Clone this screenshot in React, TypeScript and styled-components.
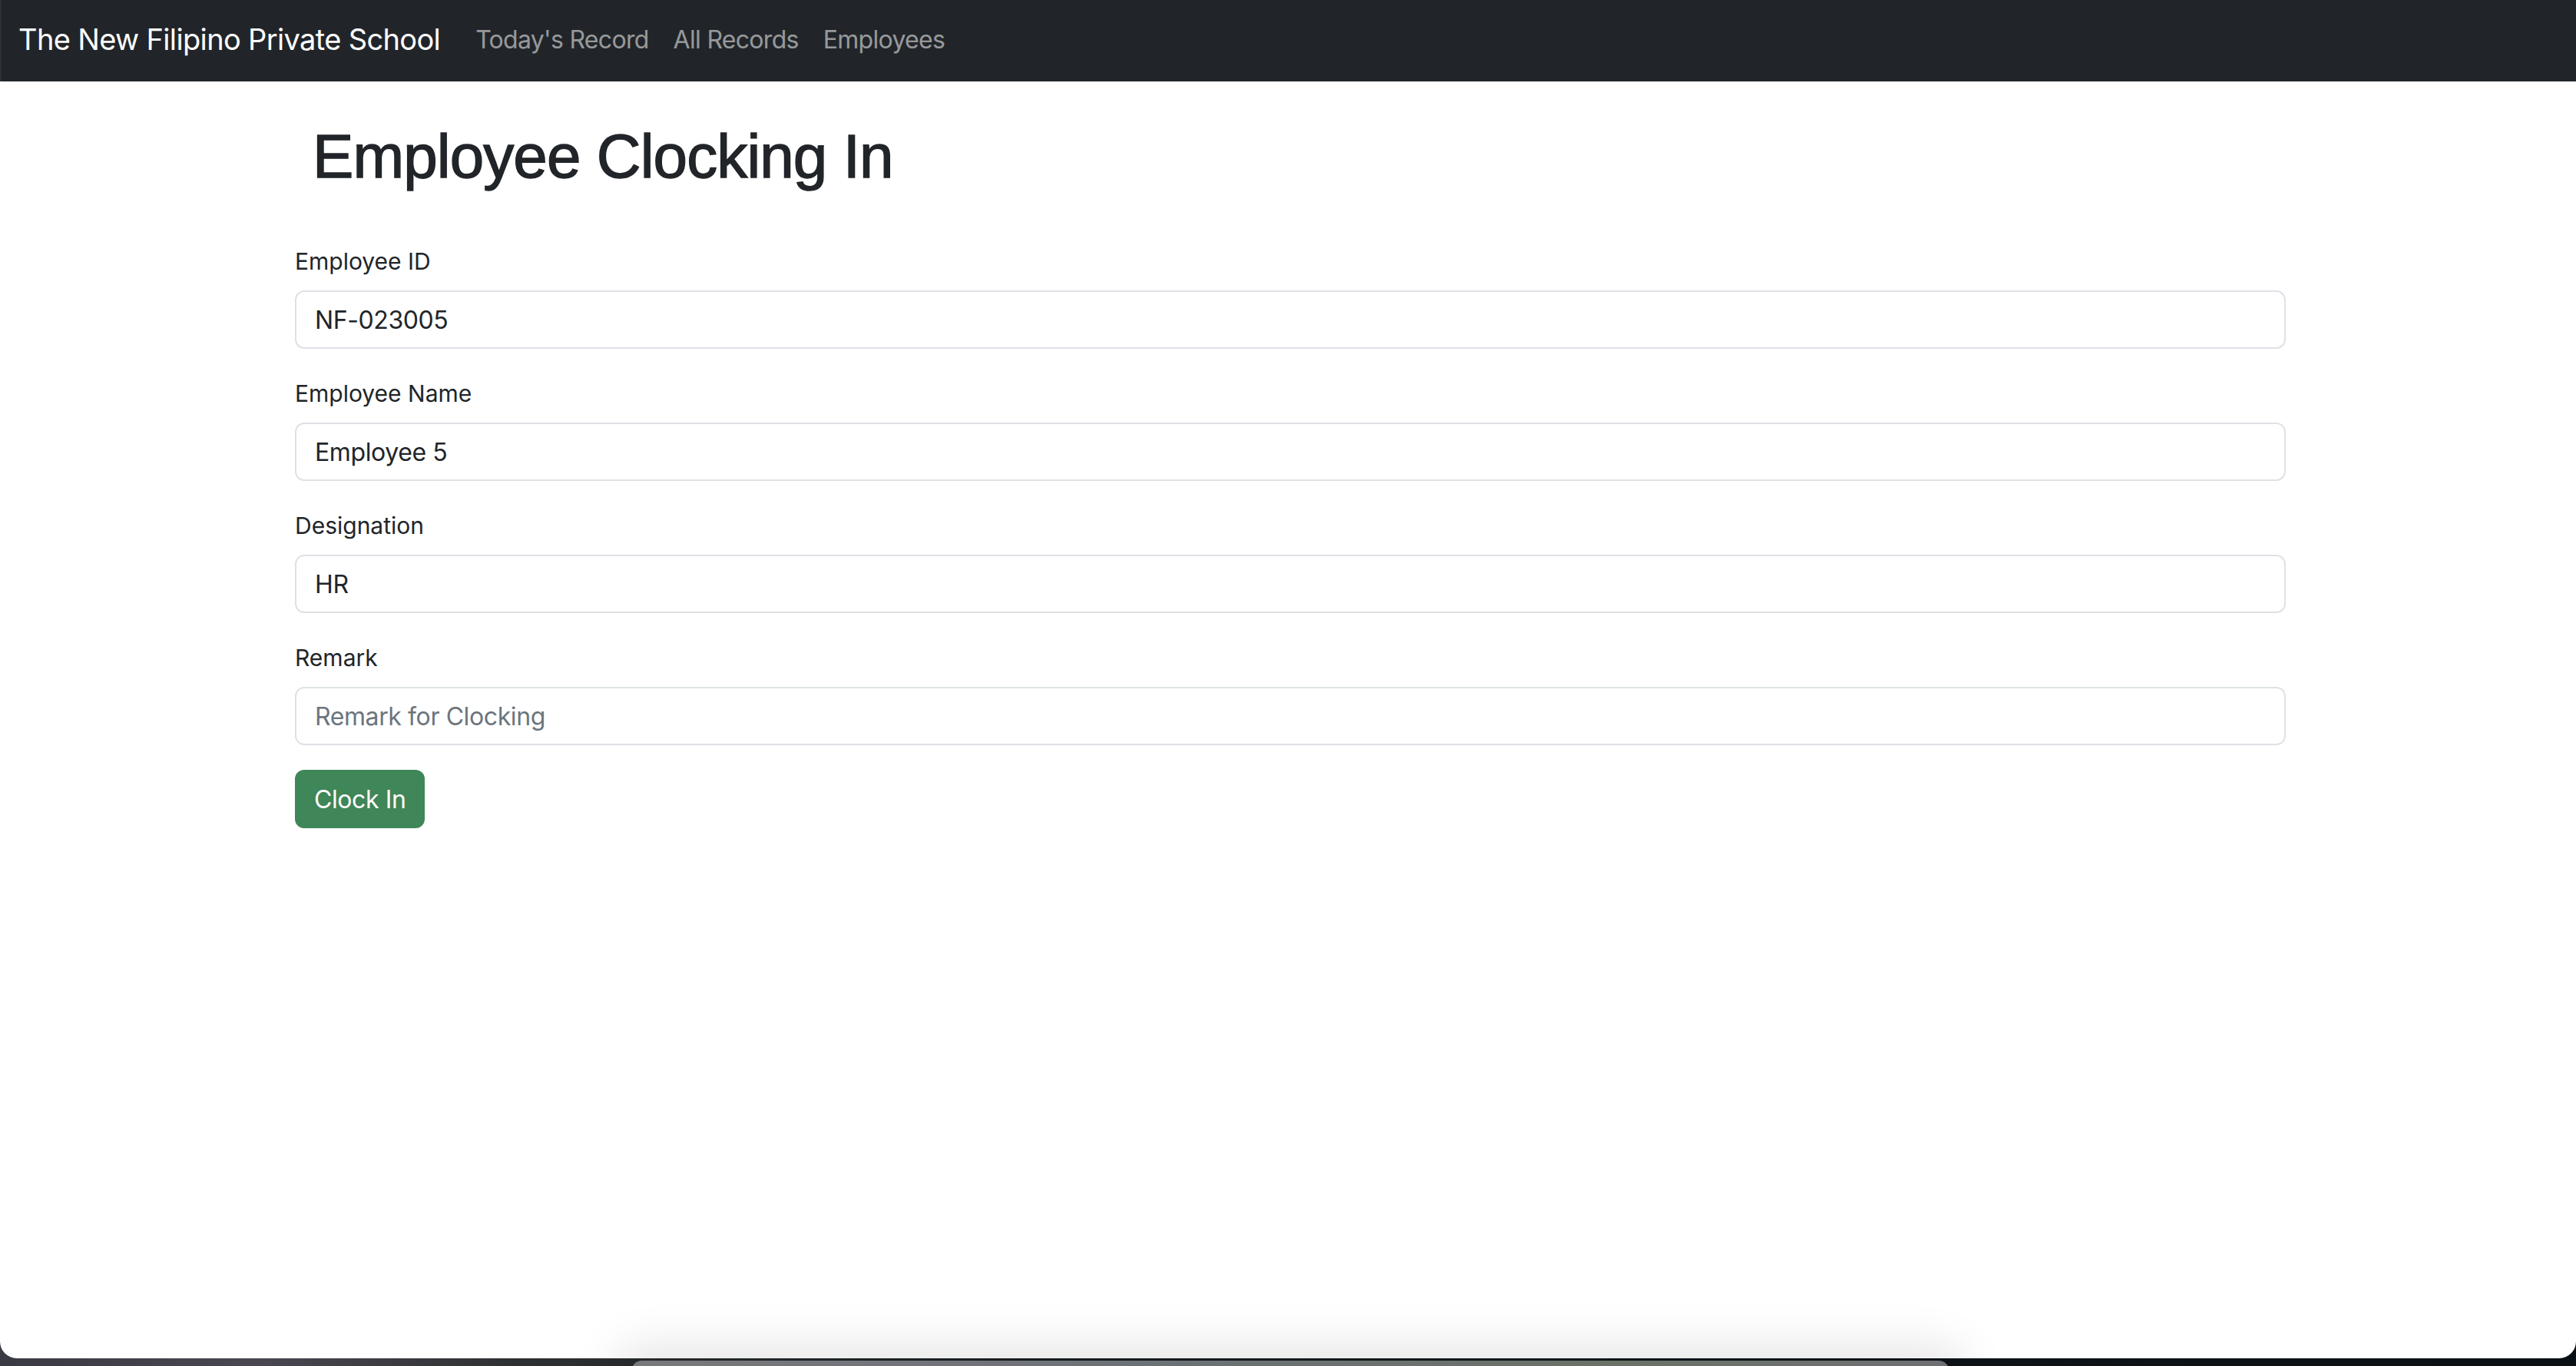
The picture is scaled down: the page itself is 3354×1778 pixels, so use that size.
import React from "react";
import styled, { createGlobalStyle } from "styled-components";

const GlobalStyle = createGlobalStyle`
  * { box-sizing: border-box; }
  html, body { margin: 0; padding: 0; }
  body {
    background: #0d1216;
    font-family: Inter, "Noto Sans", "Liberation Sans", sans-serif;
    overflow: hidden;
  }
`;

const Screen = styled.div`
  position: relative;
  width: 3354px;
  height: 1778px;
  background: linear-gradient(90deg, #3a3a44 0%, #4a4750 10%, #2d3032 20%, #1a1f22 40%, #0e1418 70%, #0b1014 100%);
`;

const Window = styled.div`
  width: 3354px;
  height: 1768px;
  background: #ffffff;
  border-radius: 0 0 22px 22px;
  overflow: hidden;
  display: flex;
  flex-direction: column;
`;

const Navbar = styled.nav`
  height: 106px;
  flex: 0 0 106px;
  background: #212529;
  display: flex;
  align-items: center;
  padding: 0 24px 4px 22px;
  border-left: 2px solid #2c3035;
`;

const Brand = styled.a`
  font-family: Inter, "Noto Sans", sans-serif;
  font-size: 38px;
  color: #ffffff;
  letter-spacing: -0.65px;
  margin-right: 30px;
  text-decoration: none;
  white-space: nowrap;
`;

const NavLink = styled.a`
  font-family: Inter, "Noto Sans", sans-serif;
  font-size: 32px;
  color: rgba(255, 255, 255, 0.55);
  padding: 0 16px;
  letter-spacing: -0.7px;
  text-decoration: none;
  white-space: nowrap;
`;

const Main = styled.main`
  width: 2592px;
  margin: 0 auto;
  padding-left: 6px;
  box-sizing: content-box;
`;

const Title = styled.h1`
  font-family: "Liberation Sans", Arial, sans-serif;
  font-size: 80px;
  font-weight: 500;
  line-height: 96px;
  color: #212529;
  -webkit-text-stroke: 1.4px #212529;
  margin: 50px 0 68px 0;
  padding-left: 23px;
  letter-spacing: -0.9px;
`;

const Form = styled.form`
  display: flex;
  flex-direction: column;
`;

const Group = styled.div`
  display: flex;
  flex-direction: column;
  margin-bottom: 38px;
`;

const Label = styled.label`
  font-family: Inter, "Noto Sans", sans-serif;
  font-size: 30px;
  line-height: 40px;
  color: #212529;
  letter-spacing: 0px;
  margin-bottom: 18px;
`;

const Input = styled.input`
  height: 76px;
  width: 100%;
  border: 2px solid #dee2e6;
  border-radius: 12px;
  padding: 0 24px;
  font-family: Inter, "Noto Sans", sans-serif;
  font-size: 32px;
  letter-spacing: -0.4px;
  color: #212529;
  background: #ffffff;
  outline: none;
  &::placeholder {
    color: #6c757d;
  }
`;

const LastGroup = styled(Group)`
  margin-bottom: 32px;
`;

const Button = styled.button`
  align-self: flex-start;
  height: 76px;
  padding: 0 25px;
  border: none;
  border-radius: 12px;
  background: #3f8658;
  color: #ffffff;
  font-family: Inter, "Noto Sans", sans-serif;
  font-size: 32px;
  letter-spacing: -0.4px;
  cursor: pointer;
`;

const Dock = styled.div`
  position: absolute;
  left: 822px;
  top: 1771px;
  width: 1716px;
  height: 40px;
  border-radius: 14px 14px 0 0;
  background: linear-gradient(90deg, #77797c 0%, #6c7176 40%, #6a7268 75%, #6d6f72 100%);
  box-shadow: 0 0 60px 20px rgba(0, 0, 0, 0.1);
`;

const fields = [
  { label: "Employee ID", value: "NF-023005" },
  { label: "Employee Name", value: "Employee 5" },
  { label: "Designation", value: "HR" },
];

export default function App() {
  return (
    <>
      <GlobalStyle />
      <Screen>
        <Window>
          <Navbar>
            <Brand href="#">The New Filipino Private School</Brand>
            <NavLink href="#">Today's Record</NavLink>
            <NavLink href="#">All Records</NavLink>
            <NavLink href="#">Employees</NavLink>
          </Navbar>
          <Main>
            <Title>Employee Clocking In</Title>
            <Form onSubmit={(e) => e.preventDefault()}>
              {fields.map((f) => (
                <Group key={f.label}>
                  <Label>{f.label}</Label>
                  <Input defaultValue={f.value} />
                </Group>
              ))}
              <LastGroup>
                <Label>Remark</Label>
                <Input placeholder="Remark for Clocking" />
              </LastGroup>
              <Button type="submit">Clock In</Button>
            </Form>
          </Main>
        </Window>
        <Dock />
      </Screen>
    </>
  );
}
